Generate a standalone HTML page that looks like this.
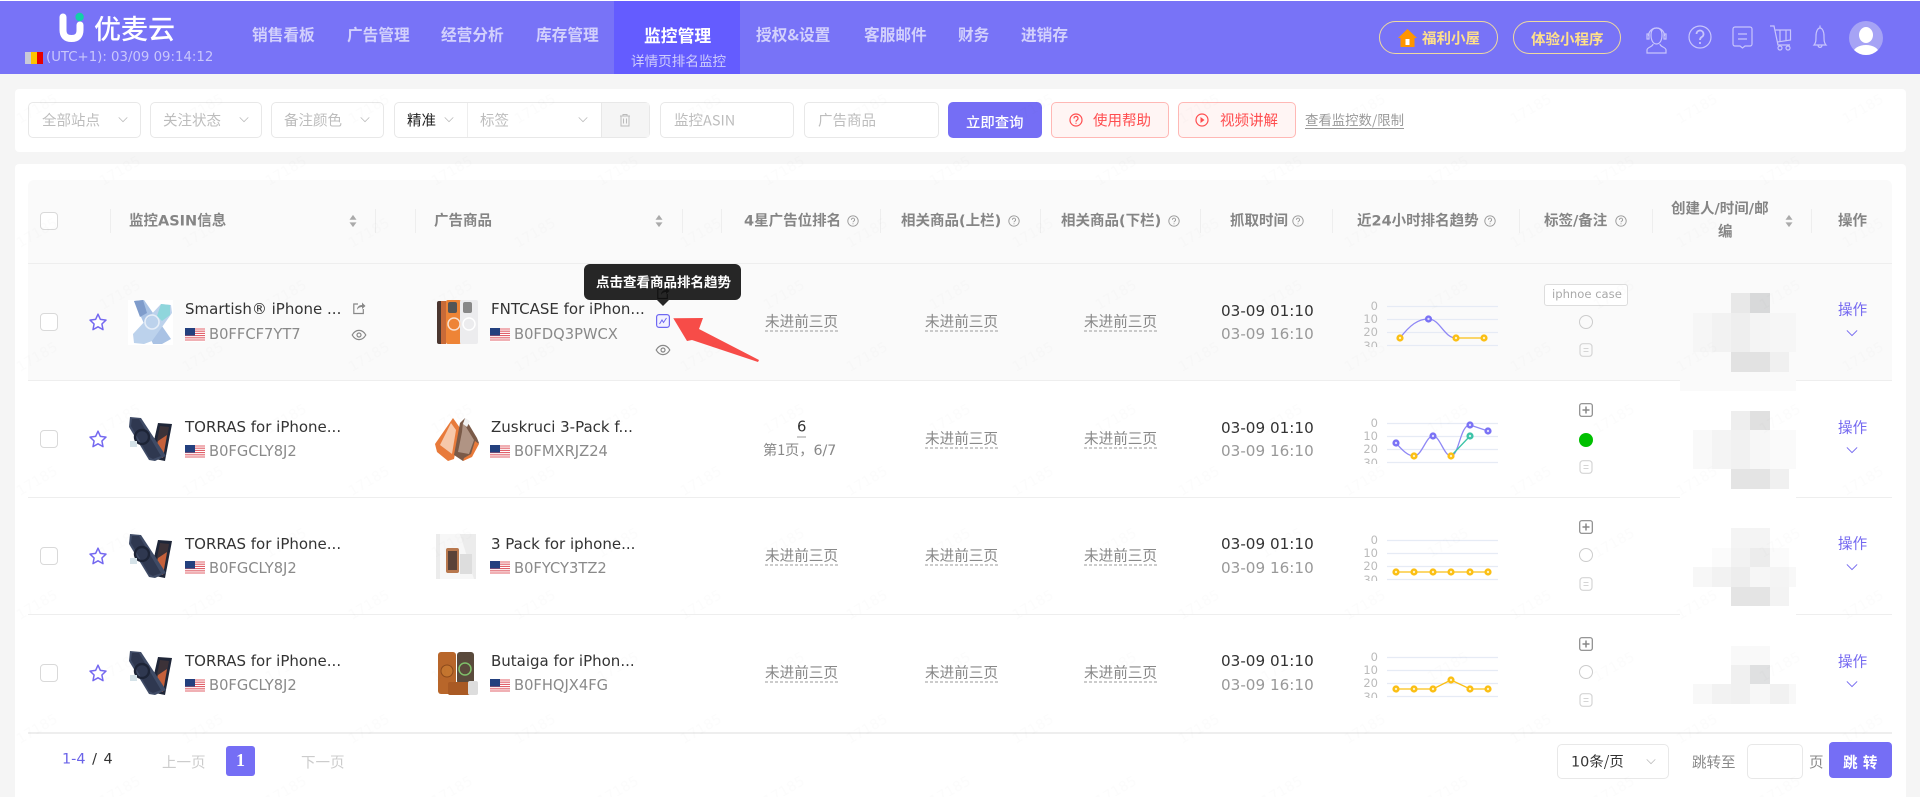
<!DOCTYPE html>
<html lang="zh"><head><meta charset="utf-8"><title>优麦云</title>
<style>
*{box-sizing:border-box}
html,body{margin:0;padding:0;background:#f5f5f5}
#p{position:relative;width:1920px;height:797px;overflow:hidden;background:#f5f5f5;font-family:"DejaVu Sans","Noto Sans CJK SC",sans-serif;font-size:14.6px;color:#333}
#p div,#p span.a,#p svg.a{position:absolute}
.t{position:absolute;white-space:nowrap;transform:translateY(-50%);line-height:1.2}
.nav{font-family:"Noto Sans CJK SC",sans-serif;font-weight:700;font-size:15.7px;color:#d2d0fc;top:35px}
.box{background:#fff;border:1px solid #e8e8e8;border-radius:5px;height:36px;top:102px}
.ph{color:#bdbdbd;top:120px;font-family:"Noto Sans CJK SC",sans-serif;font-size:14.5px}
.th{font-family:"DejaVu Sans","Noto Sans CJK SC",sans-serif;font-weight:700;font-size:14.5px;color:#858585;top:222px}
.dv{width:1px;height:24px;top:209px;background:#eee}
.row{left:28px;width:1864px;height:117px;border-bottom:1px solid #eee;background:#fff}
.cb{width:18px;height:18px;border:1px solid #d9d9d9;border-radius:4px;background:#fff}
.ti{color:#333;font-size:15px}
.as{color:#8a8a8a;font-size:14.7px}
.un{color:#888;font-family:"Noto Sans CJK SC",sans-serif;font-size:14.6px;border-bottom:1px dashed #999;line-height:18px;width:73px;text-align:center}
.tm{font-size:15.2px;color:#333}
.tg{font-size:15.2px;color:#999}
.op{font-family:"Noto Sans CJK SC",sans-serif;color:#7468f0;font-size:14.6px}
.hf{font-family:"Noto Sans CJK SC",sans-serif;font-weight:700}
</style></head><body>
<div id="p">
<svg width="0" height="0" style="position:absolute">
<defs>
<symbol id="q" viewBox="0 0 12 12"><circle cx="6" cy="6" r="5.2" fill="none" stroke="#999" stroke-width=".9"/><path d="M4.4 4.8a1.6 1.6 0 1 1 2.4 1.3c-.6.4-.8.6-.8 1.2M6 8.4v.9" fill="none" stroke="#999" stroke-width=".9"/></symbol>
<symbol id="st" viewBox="0 0 20 20"><path d="M10 2.2l2.4 5.2 5.6.7-4.1 3.9 1.1 5.6-5-2.8-5 2.8 1.1-5.6L2 8.1l5.6-.7z" fill="#fff" stroke="#7468f0" stroke-width="1.5" stroke-linejoin="round"/></symbol>
<symbol id="us" viewBox="0 0 20 14"><rect width="20" height="14" fill="#fff"/><path d="M0 1h20M0 3.2h20M0 5.4h20M0 7.6h20M0 9.8h20M0 12h20" stroke="#e0606a" stroke-width="1.1"/><rect width="10" height="7.6" fill="#23407e"/></symbol>
<symbol id="eye" viewBox="0 0 16 14"><path d="M1.2 7C3 3.8 5.3 2.4 8 2.4S13 3.8 14.800 7C13 10.200 10.700 11.600 8 11.600S3 10.200 1.200 7Z" fill="none" stroke="#888" stroke-width="1.200"/><circle cx="8" cy="7" r="2" fill="none" stroke="#888" stroke-width="1.200"/></symbol>
<symbol id="sh" viewBox="0 0 14 14"><path d="M6 3H1.800v9.500h9.500V8" fill="none" stroke="#888" stroke-width="1.200"/><path d="M5 9c0-3.500 2.500-5 5-5V1.500L13.500 5 10 8V6C8 6 6 7 5 9z" fill="#888"/></symbol>
<symbol id="sort" viewBox="0 0 10 16"><path d="M5 1l4 5.500H1zM5 15l-4-5.500h8z" fill="#aaa"/></symbol>
<symbol id="chev" viewBox="0 0 14 8"><path d="M1 1l6 6 6-6" fill="none" stroke="currentColor" stroke-width="1.100"/></symbol>
<symbol id="plus" viewBox="0 0 14 14"><rect x=".7" y=".7" width="12.600" height="12.600" rx="2" fill="#fff" stroke="#888" stroke-width="1.200"/><path d="M7 3.500v7M3.500 7h7" stroke="#888" stroke-width="1.500"/></symbol>
<symbol id="note" viewBox="0 0 14 14"><rect x="1" y=".7" width="12" height="12.600" rx="3" fill="none" stroke="#d5d5d5" stroke-width="1.200"/><path d="M4.500 5.500h5M4.500 8.500h5" stroke="#d5d5d5" stroke-width="1.100"/></symbol>
<symbol id="torras" viewBox="0 0 45 45">
<path d="M30 6l14 1-7 37-15-3z" fill="#1f2638"/><path d="M32 9l9 1-6 31-9-2z" fill="#3c3238"/><path d="M30 24l9-6-4 23-9-2z" fill="#c5603a"/>
<path d="M2 0l11 1 25 38-11 5-6-1L1 10z" fill="#3f4b66"/><path d="M4 2l7 0 22 37-8 3-4-2L3 9z" fill="#2f3850"/>
<circle cx="14" cy="20" r="7" fill="none" stroke="#1d2436" stroke-width="2.400"/><rect x="2" y="24" width="7" height="6" fill="#d5e2e8"/>
</symbol>
<pattern id="wm" width="166" height="124" patternUnits="userSpaceOnUse">
<text x="20" y="50" transform="rotate(-30 20 50)" font-family="DejaVu Sans" font-size="14" fill="#000" fill-opacity=".012">17185</text>
<text x="103" y="112" transform="rotate(-30 103 112)" font-family="DejaVu Sans" font-size="14" fill="#000" fill-opacity=".012">17185</text>
</pattern>
</defs>
</svg>

<!-- header -->
<div style="left:0;top:0;width:1920px;height:1px;background:#fff"></div>
<div style="left:0;top:1px;width:1920px;height:73px;background:#7873f7"></div>
<div style="left:614px;top:1px;width:126px;height:73px;background:#645cff"></div>
<svg class="a" style="left:55px;top:10px" width="35" height="36" viewBox="55 10 35 36"><path d="M63 17V30Q63 38.500 71.500 38.500Q80 38.500 80 30V25" fill="none" stroke="#fff" stroke-width="7" stroke-linecap="round"/><circle cx="79.600" cy="17" r="4.200" fill="#12cfa8"/></svg>
<span class="t" style="left:94px;top:28px;font-family:'Noto Sans CJK SC',sans-serif;font-size:27px;color:#fff;font-weight:500">优麦云</span>
<div style="left:25px;top:52px;width:6px;height:12px;background:#c9c9d8"></div><div style="left:31px;top:52px;width:6px;height:12px;background:#fdc400"></div><div style="left:37px;top:52px;width:6px;height:12px;background:#e80000"></div>
<span class="t" style="left:46px;top:58px;font-size:13.300px;color:#c9c7fb">(UTC+1): 03/09 09:14:12</span>
<span class="t nav" style="left:252px">销售看板</span>
<span class="t nav" style="left:347px">广告管理</span>
<span class="t nav" style="left:441px">经营分析</span>
<span class="t nav" style="left:536px">库存管理</span>
<span class="t nav" style="left:644px;color:#fff;font-size:16.800px">监控管理</span>
<span class="t" style="left:631px;top:60px;font-family:'Noto Sans CJK SC',sans-serif;font-size:13.600px;color:#cfcdfb">详情页排名监控</span>
<span class="t nav" style="left:756px">授权&amp;设置</span>
<span class="t nav" style="left:864px">客服邮件</span>
<span class="t nav" style="left:958px">财务</span>
<span class="t nav" style="left:1021px">进销存</span>
<div style="left:1379px;top:21px;width:119px;height:33px;border:1px solid #eed9a0;border-radius:17px"></div>
<svg class="a" style="left:1397px;top:28px" width="21" height="20" viewBox="0 0 21 20"><path d="M10.500 1L20 10h-2.500v9h-14v-9H1z" fill="#ff9500"/><rect x="8.500" y="11" width="4" height="6" fill="#fff"/></svg>
<span class="t hf" style="left:1422px;top:38px;font-size:14.500px;color:#ffe08a">福利小屋</span>
<div style="left:1513px;top:21px;width:108px;height:33px;border:1px solid #eed9a0;border-radius:17px"></div>
<span class="t hf" style="left:1531px;top:39px;font-size:14.500px;color:#ffe08a">体验小程序</span>
<svg class="a" style="left:1640px;top:10px" width="200" height="55" viewBox="0 0 200 55" fill="none" stroke="#c8c5fb" stroke-width="1.200">
<path d="M8.500 26a8 8 0 0 1 16 0M7 24v5h2v-5zM24 24v5h2v-5z"/><path d="M11 25c0 5 2 9 5.500 9s5.500-4 5.500-9-2-7-5.500-7-5.500 2-5.500 7zM13 34c0 3-6 3-6 6v3h19v-3c0-3-6-3-6-6"/>
<circle cx="60" cy="27" r="11"/><path d="M56.500 24a3.500 3.500 0 1 1 5 3.200c-1 .6-1.500 1.200-1.500 2.800M60 32v2" stroke-width="1.800"/>
<path d="M95 17h15a2 2 0 0 1 2 2v15a2 2 0 0 1-2 2h-5l-2.500 2-2.500-2h-5a2 2 0 0 1-2-2V19a2 2 0 0 1 2-2zM98 24h9M98 29h9"/>
<path d="M130 16h4l4 19h12M135.500 20h15v10l-13 2M140 20v12M146 20v11"/><circle cx="140" cy="38" r="2"/><circle cx="148" cy="38" r="2"/>
<path d="M174 35c2-2 2-5 2-9 0-5 2-8 4-8s4 3 4 8c0 4 0 7 2 9zM178 35.500c.5 2.500 3.500 2.500 4 0M180 18v-2.500"/>
</svg>
<div style="left:1849px;top:21px;width:34px;height:34px;border-radius:50%;background:#a6a3f5;overflow:hidden"><div style="left:10px;top:6px;width:14px;height:16px;border-radius:50%;background:#fff"></div><div style="left:4px;top:24px;width:26px;height:16px;border-radius:50%;background:#fff"></div></div>

<!-- filter -->
<div style="left:15px;top:89px;width:1891px;height:63px;background:#fff;border-radius:4px"></div>
<div class="box" style="left:28px;width:113px"></div><span class="t ph" style="left:42px">全部站点</span>
<div class="box" style="left:150px;width:112px"></div><span class="t ph" style="left:163px">关注状态</span>
<div class="box" style="left:271px;width:113px"></div><span class="t ph" style="left:284px">备注颜色</span>
<div class="box" style="left:394px;width:256px"></div>
<div style="left:467px;top:103px;width:1px;height:34px;background:#eee"></div>
<div style="left:601px;top:103px;width:48px;height:34px;background:#f5f5f5;border-left:1px solid #e8e8e8"></div>
<span class="t ph" style="left:407px;color:#222">精准</span>
<span class="t ph" style="left:480px">标签</span>
<svg class="a" style="left:118px;top:116px;color:#bbb" width="10" height="7"><use href="#chev"/></svg>
<svg class="a" style="left:239px;top:116px;color:#bbb" width="10" height="7"><use href="#chev"/></svg>
<svg class="a" style="left:360px;top:116px;color:#bbb" width="10" height="7"><use href="#chev"/></svg>
<svg class="a" style="left:444px;top:116px;color:#bbb" width="10" height="7"><use href="#chev"/></svg>
<svg class="a" style="left:578px;top:116px;color:#bbb" width="10" height="7"><use href="#chev"/></svg>
<svg class="a" style="left:619px;top:113px" width="12" height="14" viewBox="0 0 12 14" fill="none" stroke="#bbb"><path d="M1 3h10M4 3V1.500h4V3M2 3v10h8V3M4.500 5.500v5M7.500 5.500v5"/></svg>
<div class="box" style="left:660px;width:134px"></div><span class="t ph" style="left:674px">监控ASIN</span>
<div class="box" style="left:804px;width:135px"></div><span class="t ph" style="left:818px">广告商品</span>
<div style="left:948px;top:102px;width:94px;height:36px;background:#756ef5;border-radius:5px"></div>
<span class="t hf" style="left:966px;top:122px;color:#fff;font-size:14.400px;font-weight:500">立即查询</span>
<div style="left:1051px;top:102px;width:118px;height:36px;background:#fff5f4;border:1px solid #ffb8b5;border-radius:5px"></div>
<svg class="a" style="left:1069px;top:113px" width="14" height="14" viewBox="0 0 14 14" fill="none" stroke="#ff4d4f" stroke-width="1.200"><circle cx="7" cy="7" r="6"/><path d="M5 5.500a2 2 0 1 1 3 1.600c-.7.400-1 .8-1 1.600M7 9.800v1"/></svg>
<span class="t ph" style="left:1093px;color:#ff4d4f">使用帮助</span>
<div style="left:1178px;top:102px;width:118px;height:36px;background:#fff5f4;border:1px solid #ffb8b5;border-radius:5px"></div>
<svg class="a" style="left:1195px;top:113px" width="14" height="14" viewBox="0 0 14 14"><circle cx="7" cy="7" r="6" fill="none" stroke="#ff4d4f" stroke-width="1.200"/><path d="M5.500 4l4 3-4 3z" fill="#ff4d4f"/></svg>
<span class="t ph" style="left:1220px;color:#ff4d4f">视频讲解</span>
<span class="t" style="left:1305px;top:120px;font-family:'Noto Sans CJK SC',sans-serif;font-size:13.400px;color:#999;border-bottom:1px solid #999;line-height:17px">查看监控数/限制</span>

<!-- table card -->
<div style="left:15px;top:164px;width:1891px;height:640px;background:#fff;border-radius:4px"></div>
<div style="left:28px;top:180px;width:1864px;height:84px;background:#fafafa;border-bottom:1px solid #eee;border-radius:6px 6px 0 0"></div>
<div class="cb" style="left:40px;top:212px"></div>
<div class="dv" style="left:110px"></div><div class="dv" style="left:375px"></div><div class="dv" style="left:415px"></div><div class="dv" style="left:682px"></div><div class="dv" style="left:721px"></div><div class="dv" style="left:880px"></div><div class="dv" style="left:1040px"></div><div class="dv" style="left:1200px"></div><div class="dv" style="left:1332px"></div><div class="dv" style="left:1519px"></div><div class="dv" style="left:1652px"></div><div class="dv" style="left:1811px"></div>
<span class="t th" style="left:129px">监控ASIN信息</span>
<svg class="a" style="left:348px;top:214px" width="10" height="14"><use href="#sort"/></svg>
<span class="t th" style="left:434px">广告商品</span>
<svg class="a" style="left:654px;top:214px" width="10" height="14"><use href="#sort"/></svg>
<span class="t th" style="left:744px">4星广告位排名</span><svg class="a" style="left:847px;top:215px" width="12" height="12"><use href="#q"/></svg>
<span class="t th" style="left:901px">相关商品(上栏)</span><svg class="a" style="left:1008px;top:215px" width="12" height="12"><use href="#q"/></svg>
<span class="t th" style="left:1061px">相关商品(下栏)</span><svg class="a" style="left:1168px;top:215px" width="12" height="12"><use href="#q"/></svg>
<span class="t th" style="left:1230px">抓取时间</span><svg class="a" style="left:1292px;top:215px" width="12" height="12"><use href="#q"/></svg>
<span class="t th" style="left:1357px">近24小时排名趋势</span><svg class="a" style="left:1484px;top:215px" width="12" height="12"><use href="#q"/></svg>
<span class="t th" style="left:1544px">标签/备注</span><svg class="a" style="left:1615px;top:215px" width="12" height="12"><use href="#q"/></svg>
<span class="t th" style="left:1671px;top:210px">创建人/时间/邮</span><span class="t th" style="left:1718px;top:233px">编</span>
<svg class="a" style="left:1784px;top:214px" width="10" height="14"><use href="#sort"/></svg>
<span class="t th" style="left:1838px">操作</span>

<!-- rows backgrounds -->
<div class="row" style="top:264px;height:117px;background:#fafafa"></div>
<div class="row" style="top:381px"></div>
<div class="row" style="top:498px"></div>
<div style="left:28px;top:732px;width:1864px;height:2px;background:#eee"></div>

<!-- checkboxes, stars -->
<div class="cb" style="left:40px;top:313px"></div><div class="cb" style="left:40px;top:430px"></div><div class="cb" style="left:40px;top:547px"></div><div class="cb" style="left:40px;top:664px"></div>
<svg class="a" style="left:88px;top:312px" width="20" height="20"><use href="#st"/></svg>
<svg class="a" style="left:88px;top:429px" width="20" height="20"><use href="#st"/></svg>
<svg class="a" style="left:88px;top:546px" width="20" height="20"><use href="#st"/></svg>
<svg class="a" style="left:88px;top:663px" width="20" height="20"><use href="#st"/></svg>

<!-- thumbs col 1 -->
<svg class="a" style="left:128px;top:300px" width="45" height="45" viewBox="0 0 45 45"><rect width="45" height="45" fill="#fff"/><path d="M6 1l10-1 27 39-9 5-9 0z" fill="#a9c2e4"/><path d="M33 4l10 1 1 8-20 28-8 3-10-1-1-9z" fill="#bcd2ec"/><path d="M33 4l9 1 0 10-8 6-5-5z" fill="#8fd6dc"/><path d="M6 1l9-1 4 13-7 4z" fill="#7f9ccb"/><circle cx="24" cy="22" r="7" fill="none" stroke="#e6eef8" stroke-width="1.600"/></svg>
<svg class="a" style="left:128px;top:417px" width="45" height="45"><use href="#torras"/></svg>
<svg class="a" style="left:128px;top:534px" width="45" height="45"><use href="#torras"/></svg>
<svg class="a" style="left:128px;top:651px" width="45" height="45"><use href="#torras"/></svg>

<span class="t ti" style="left:185px;top:309px">Smartish® iPhone ...</span>
<span class="t ti" style="left:185px;top:427px">TORRAS for iPhone...</span>
<span class="t ti" style="left:185px;top:544px">TORRAS for iPhone...</span>
<span class="t ti" style="left:185px;top:661px">TORRAS for iPhone...</span>
<svg class="a" style="left:185px;top:328px" width="20" height="14"><use href="#us"/></svg><span class="t as" style="left:209px;top:335px">B0FFCF7YT7</span>
<svg class="a" style="left:185px;top:445px" width="20" height="14"><use href="#us"/></svg><span class="t as" style="left:209px;top:452px">B0FGCLY8J2</span>
<svg class="a" style="left:185px;top:561px" width="20" height="14"><use href="#us"/></svg><span class="t as" style="left:209px;top:569px">B0FGCLY8J2</span>
<svg class="a" style="left:185px;top:679px" width="20" height="14"><use href="#us"/></svg><span class="t as" style="left:209px;top:686px">B0FGCLY8J2</span>
<svg class="a" style="left:352px;top:301px" width="14" height="14"><use href="#sh"/></svg>
<svg class="a" style="left:351px;top:328px" width="16" height="14"><use href="#eye"/></svg>

<!-- thumbs col 2 -->
<svg class="a" style="left:436px;top:300px" width="44" height="45" viewBox="0 0 44 45"><rect x="1" y="1" width="9" height="43" rx="2" fill="#4a3630"/><rect x="5" y="1" width="5" height="43" fill="#c86a38"/><rect x="10" y="0" width="15" height="44" rx="2" fill="#ee8436"/><rect x="24" y="0" width="18" height="44" rx="2" fill="#ececee"/><rect x="12" y="2" width="9" height="11" rx="2" fill="#555"/><rect x="27" y="2" width="9" height="11" rx="2" fill="#888"/><circle cx="18" cy="24" r="6" fill="none" stroke="#f8e0d0" stroke-width="1.500"/><circle cx="33" cy="24" r="6" fill="none" stroke="#fff" stroke-width="1.500"/></svg>
<svg class="a" style="left:434px;top:417px" width="46" height="45" viewBox="0 0 46 45"><path d="M19 1l7 10-6 31-6 2-11-9-2-8z" fill="#e87a3a"/><path d="M17 6l5 7-4 24-12-9z" fill="#f6c8aa"/><path d="M31 1l12 20 2 5-7 13-9 5-9-6 6-32z" fill="#7a5a48"/><path d="M29 5l11 18-5 14-11-2 4-20z" fill="#b09484"/><path d="M31 1l5 3-3 6-4-3z" fill="#f2f2f2"/><path d="M41 24l4 3-7 13-9 4 1-3 7-4z" fill="#e87a3a"/></svg>
<svg class="a" style="left:436px;top:534px" width="44" height="45" viewBox="0 0 44 45"><rect width="40" height="45" x="0" fill="#ececec"/><path d="M4 0h20l14 45H4z" fill="#f7f7f7"/><rect x="10" y="14" width="13" height="25" rx="2" fill="#b8784e"/><rect x="12" y="17" width="9" height="19" fill="#5a4238"/><rect x="24" y="20" width="12" height="20" fill="#ddd"/></svg>
<svg class="a" style="left:436px;top:651px" width="44" height="45" viewBox="0 0 44 45"><rect x="2" y="1" width="18" height="42" rx="3" fill="#b8662a"/><rect x="21" y="1" width="17" height="32" rx="3" fill="#5a4a3c"/><circle cx="29" cy="18" r="6" fill="none" stroke="#7fbf6a" stroke-width="1.500"/><circle cx="11" cy="20" r="6" fill="#c4752f" stroke="#8c4a1c"/><rect x="12" y="31" width="24" height="13" rx="2" fill="#a95a24"/><rect x="32" y="30" width="10" height="14" rx="2" fill="#ddd"/></svg>

<span class="t ti" style="left:491px;top:309px">FNTCASE for iPhon...</span>
<span class="t ti" style="left:491px;top:427px">Zuskruci 3-Pack f...</span>
<span class="t ti" style="left:491px;top:544px">3 Pack for iphone...</span>
<span class="t ti" style="left:491px;top:661px">Butaiga for iPhon...</span>
<svg class="a" style="left:490px;top:328px" width="20" height="14"><use href="#us"/></svg><span class="t as" style="left:514px;top:335px">B0FDQ3PWCX</span>
<svg class="a" style="left:490px;top:445px" width="20" height="14"><use href="#us"/></svg><span class="t as" style="left:514px;top:452px">B0FMXRJZ24</span>
<svg class="a" style="left:490px;top:561px" width="20" height="14"><use href="#us"/></svg><span class="t as" style="left:514px;top:569px">B0FYCY3TZ2</span>
<svg class="a" style="left:490px;top:679px" width="20" height="14"><use href="#us"/></svg><span class="t as" style="left:514px;top:686px">B0FHQJX4FG</span>
<svg class="a" style="left:656px;top:314px" width="14" height="14" viewBox="0 0 14 14" fill="none" stroke="#6f68f2"><rect x=".6" y=".6" width="12.800" height="12.800" rx="2.500" stroke-width="1.200" fill="#f3f2ff"/><path d="M3.500 10l2.500-4 1.500 2.500L10.500 4"/></svg>
<svg class="a" style="left:655px;top:343px" width="16" height="14"><use href="#eye"/></svg>
<!-- tooltip -->
<div style="left:584px;top:264px;width:157px;height:36px;background:#262626;border-radius:6px"></div>
<svg class="a" style="left:657px;top:300px" width="12" height="6"><path d="M0 0h12L6 6z" fill="#262626"/></svg>
<span class="t" style="left:596px;top:281px;font-family:'Noto Sans CJK SC',sans-serif;font-weight:700;font-size:13.500px;color:#fff">点击查看商品排名趋势</span>
<svg class="a" style="left:655px;top:286px" width="16" height="14" viewBox="0 0 14 14" opacity=".55"><path d="M6 3H1.800v9.500h9.500V8" fill="none" stroke="#000" stroke-width="1.200"/><path d="M5 9c0-3.500 2.500-5 5-5V1.500L13.500 5 10 8V6C8 6 6 7 5 9z" fill="#000"/></svg>
<svg class="a" style="left:660px;top:310px" width="110" height="60" viewBox="660 310 110 60"><path d="M673.300 318.300L703 318L699 329L759 360L758 362L692 340L687 341Z" fill="#f74c48"/></svg>

<!-- 未进前三页 -->
<span class="t un" style="left:765px;top:322px">未进前三页</span>
<span class="t un" style="left:925px;top:322px">未进前三页</span>
<span class="t un" style="left:1084px;top:322px">未进前三页</span>
<span class="t" style="left:797px;top:428px;font-size:14.800px;color:#333;border-bottom:1px solid #999;line-height:18px">6</span>
<span class="t" style="left:763px;top:451px;font-size:14.200px;color:#888"><span style="font-family:'Noto Sans CJK SC',sans-serif">第1页，</span>6/7</span>
<span class="t un" style="left:925px;top:439px">未进前三页</span>
<span class="t un" style="left:1084px;top:439px">未进前三页</span>
<span class="t un" style="left:765px;top:556px">未进前三页</span>
<span class="t un" style="left:925px;top:556px">未进前三页</span>
<span class="t un" style="left:1084px;top:556px">未进前三页</span>
<span class="t un" style="left:765px;top:673px">未进前三页</span>
<span class="t un" style="left:925px;top:673px">未进前三页</span>
<span class="t un" style="left:1084px;top:673px">未进前三页</span>

<!-- times -->
<span class="t tm" style="left:1221px;top:311px">03-09 01:10</span><span class="t tg" style="left:1221px;top:334px">03-09 16:10</span>
<span class="t tm" style="left:1221px;top:428px">03-09 01:10</span><span class="t tg" style="left:1221px;top:451px">03-09 16:10</span>
<span class="t tm" style="left:1221px;top:544px">03-09 01:10</span><span class="t tg" style="left:1221px;top:568px">03-09 16:10</span>
<span class="t tm" style="left:1221px;top:661px">03-09 01:10</span><span class="t tg" style="left:1221px;top:685px">03-09 16:10</span>

<!-- charts -->
<svg class="a" style="left:1360px;top:263px" width="145" height="84" viewBox="0 0 145 84" font-family="DejaVu Sans" font-size="11.500" fill="#bbb" text-anchor="end">
<path d="M27 43.500h111M27 56.500h111M27 69.500h111M27 82.500h111" stroke="#e6ebf5" stroke-width="1.200"/>
<text x="18" y="47">0</text><text x="18" y="60">10</text><text x="18" y="73">20</text><text x="18" y="87">30</text>
<path d="M40 75C50 62 58 56 68.500 56C80 56 84 75 96 75" fill="none" stroke="#8f88f5" stroke-width="1.300"/><path d="M96 75H124" stroke="#fbbf14" stroke-width="1.300"/>
<g fill="#fff2c0" stroke="#fbbf14" stroke-width="2.400"><circle cx="40" cy="75" r="2.400"/><circle cx="96" cy="75" r="2.400"/><circle cx="124" cy="75" r="2.400"/></g><circle cx="68.500" cy="56" r="2.400" fill="#dcdaff" stroke="#7a72f5" stroke-width="2.400"/>
</svg>
<svg class="a" style="left:1360px;top:380px" width="145" height="84" viewBox="0 0 145 84" font-family="DejaVu Sans" font-size="11.500" fill="#bbb" text-anchor="end">
<path d="M27 43.500h111M27 56.500h111M27 69.500h111M27 82.500h111" stroke="#e6ebf5" stroke-width="1.200"/>
<text x="18" y="47">0</text><text x="18" y="60">10</text><text x="18" y="73">20</text><text x="18" y="87">30</text>
<path d="M36 63C42 70 48 76 54 76C62 76 66 56 73 56C80 56 84 76 91 76C99 76 100 45 110 45L128 51" fill="none" stroke="#8f88f5" stroke-width="1.300"/><path d="M91 76L110 56" stroke="#3cc3a8" stroke-width="1.300"/>
<g fill="#dcdaff" stroke="#7a72f5" stroke-width="2.400"><circle cx="36" cy="63" r="2.400"/><circle cx="73" cy="56" r="2.400"/><circle cx="110" cy="45" r="2.400"/><circle cx="128" cy="51" r="2.400"/></g>
<g fill="#fff2c0" stroke="#fbbf14" stroke-width="2.400"><circle cx="54" cy="76" r="2.400"/><circle cx="91" cy="76" r="2.400"/></g><circle cx="110" cy="56" r="2.400" fill="#d0f3ea" stroke="#3cc3a8" stroke-width="2.400"/>
</svg>
<svg class="a" style="left:1360px;top:497px" width="145" height="84" viewBox="0 0 145 84" font-family="DejaVu Sans" font-size="11.500" fill="#bbb" text-anchor="end">
<path d="M27 43.500h111M27 56.500h111M27 69.500h111M27 82.500h111" stroke="#e6ebf5" stroke-width="1.200"/>
<text x="18" y="47">0</text><text x="18" y="60">10</text><text x="18" y="73">20</text><text x="18" y="87">30</text>
<path d="M36 75H128" stroke="#fbbf14" stroke-width="1.300"/>
<g fill="#fff2c0" stroke="#fbbf14" stroke-width="2.400"><circle cx="36" cy="75" r="2.400"/><circle cx="54" cy="75" r="2.400"/><circle cx="73" cy="75" r="2.400"/><circle cx="91" cy="75" r="2.400"/><circle cx="110" cy="75" r="2.400"/><circle cx="128" cy="75" r="2.400"/></g>
</svg>
<svg class="a" style="left:1360px;top:614px" width="145" height="84" viewBox="0 0 145 84" font-family="DejaVu Sans" font-size="11.500" fill="#bbb" text-anchor="end">
<path d="M27 43.500h111M27 56.500h111M27 69.500h111M27 82.500h111" stroke="#e6ebf5" stroke-width="1.200"/>
<text x="18" y="47">0</text><text x="18" y="60">10</text><text x="18" y="73">20</text><text x="18" y="87">30</text>
<path d="M36 75H73L91 66L110 75H128" fill="none" stroke="#fbbf14" stroke-width="1.300"/>
<g fill="#fff2c0" stroke="#fbbf14" stroke-width="2.400"><circle cx="36" cy="75" r="2.400"/><circle cx="54" cy="75" r="2.400"/><circle cx="73" cy="75" r="2.400"/><circle cx="91" cy="66" r="2.400"/><circle cx="110" cy="75" r="2.400"/><circle cx="128" cy="75" r="2.400"/></g>
</svg>

<!-- tags -->
<div style="left:1544px;top:284px;width:84px;height:22px;border:1px solid #ddd;border-radius:3px;background:#fff"></div>
<span class="t" style="left:1552px;top:295px;font-size:11.600px;color:#aaa">iphnoe case</span>
<div style="left:1579px;top:315px;width:14px;height:14px;border:1.500px solid #ccc;border-radius:50%"></div>
<svg class="a" style="left:1579px;top:343px" width="14" height="14"><use href="#note"/></svg>
<svg class="a" style="left:1579px;top:403px" width="14" height="14"><use href="#plus"/></svg>
<div style="left:1579px;top:433px;width:14px;height:14px;background:#00c000;border-radius:50%"></div>
<svg class="a" style="left:1579px;top:460px" width="14" height="14"><use href="#note"/></svg>
<svg class="a" style="left:1579px;top:520px" width="14" height="14"><use href="#plus"/></svg>
<div style="left:1579px;top:548px;width:14px;height:14px;border:1.500px solid #ccc;border-radius:50%"></div>
<svg class="a" style="left:1579px;top:577px" width="14" height="14"><use href="#note"/></svg>
<svg class="a" style="left:1579px;top:637px" width="14" height="14"><use href="#plus"/></svg>
<div style="left:1579px;top:665px;width:14px;height:14px;border:1.500px solid #ccc;border-radius:50%"></div>
<svg class="a" style="left:1579px;top:693px" width="14" height="14"><use href="#note"/></svg>

<!-- mosaic -->
<div style="left:1680px;top:275px;width:116px;height:116px;background:#fafafa"></div>
<div style="left:1680px;top:391px;width:116px;height:330px;background:#fff"></div>
<svg class="a" style="left:1680px;top:275px" width="116" height="450" viewBox="0 0 116 450" shape-rendering="crispEdges">
<rect x="51" y="18" width="19" height="20" fill="#e8e8e8"/><rect x="70" y="18" width="20" height="20" fill="#d8d9da"/>
<rect x="13" y="38" width="19" height="39" fill="#f6f6f6"/><rect x="32" y="38" width="19" height="39" fill="#f2f2f2"/><rect x="51" y="38" width="19" height="39" fill="#eeeeee"/><rect x="70" y="38" width="20" height="39" fill="#f4f4f4"/><rect x="90" y="38" width="26" height="39" fill="#f6f6f6"/>
<rect x="51" y="77" width="39" height="20" fill="#e2e2e2"/><rect x="90" y="77" width="19" height="20" fill="#f0f0f0"/>
<rect x="51" y="136" width="19" height="19" fill="#eeeeee"/><rect x="70" y="136" width="20" height="19" fill="#e0e0e0"/>
<rect x="13" y="155" width="19" height="39" fill="#f9f9f9"/><rect x="32" y="155" width="19" height="39" fill="#f4f4f4"/><rect x="51" y="155" width="19" height="39" fill="#f1f1f1"/><rect x="70" y="155" width="20" height="39" fill="#f7f7f7"/><rect x="90" y="155" width="26" height="39" fill="#fafafa"/>
<rect x="51" y="194" width="39" height="20" fill="#e4e4e4"/><rect x="90" y="194" width="19" height="20" fill="#f0f0f0"/>
<rect x="51" y="253" width="39" height="20" fill="#f4f4f4"/>
<rect x="32" y="273" width="19" height="19" fill="#fbfbfb"/><rect x="51" y="273" width="19" height="19" fill="#f2f2f2"/><rect x="70" y="273" width="20" height="19" fill="#ececec"/><rect x="90" y="273" width="19" height="19" fill="#fbfbfb"/>
<rect x="13" y="292" width="19" height="20" fill="#f7f7f7"/><rect x="32" y="292" width="19" height="20" fill="#f2f2f2"/><rect x="51" y="292" width="19" height="20" fill="#ededed"/><rect x="70" y="292" width="20" height="20" fill="#f6f6f6"/><rect x="90" y="292" width="19" height="20" fill="#f4f4f4"/><rect x="109" y="292" width="7" height="20" fill="#f8f8f8"/>
<rect x="51" y="312" width="39" height="19" fill="#e4e4e4"/><rect x="90" y="312" width="19" height="19" fill="#f3f3f3"/>
<rect x="51" y="371" width="39" height="19" fill="#f9f9f9"/>
<rect x="51" y="390" width="19" height="19" fill="#f0f0f0"/><rect x="70" y="390" width="20" height="19" fill="#dfe0e1"/>
<rect x="13" y="409" width="19" height="20" fill="#f8f8f8"/><rect x="32" y="409" width="19" height="20" fill="#f2f2f2"/><rect x="51" y="409" width="19" height="20" fill="#f0f0f0"/><rect x="70" y="409" width="20" height="20" fill="#f7f7f7"/><rect x="90" y="409" width="19" height="20" fill="#f1f1f1"/><rect x="109" y="409" width="7" height="20" fill="#f8f8f8"/>
</svg>

<!-- ops -->
<span class="t op" style="left:1838px;top:309px">操作</span><svg class="a" style="left:1846px;top:329px;color:#7468f0" width="12" height="8"><use href="#chev"/></svg>
<span class="t op" style="left:1838px;top:427px">操作</span><svg class="a" style="left:1846px;top:446px;color:#7468f0" width="12" height="8"><use href="#chev"/></svg>
<span class="t op" style="left:1838px;top:543px">操作</span><svg class="a" style="left:1846px;top:563px;color:#7468f0" width="12" height="8"><use href="#chev"/></svg>
<span class="t op" style="left:1838px;top:661px">操作</span><svg class="a" style="left:1846px;top:680px;color:#7468f0" width="12" height="8"><use href="#chev"/></svg>

<!-- footer -->
<span class="t" style="left:62px;top:760px;font-size:14.400px;color:#333;word-spacing:2px"><span style="color:#6a63e8">1-4</span> / 4</span>
<span class="t ph" style="left:162px;top:762px;color:#ccc">上一页</span>
<div style="left:226px;top:746px;width:29px;height:30px;background:#756ef5;border-radius:3px"></div>
<span class="t" style="left:236px;top:761px;font-family:'Liberation Serif',serif;font-weight:700;font-size:18px;color:#fff">1</span>
<span class="t ph" style="left:301px;top:762px;color:#ccc">下一页</span>
<div class="box" style="left:1557px;top:744px;width:112px;height:35px"></div>
<span class="t" style="left:1571px;top:762px;color:#333;font-size:14.400px">10<span style="font-family:'Noto Sans CJK SC',sans-serif">条/页</span></span>
<svg class="a" style="left:1646px;top:758px;color:#bbb" width="10" height="7"><use href="#chev"/></svg>
<span class="t ph" style="left:1692px;top:762px;color:#888">跳转至</span>
<div class="box" style="left:1747px;top:744px;width:56px;height:35px"></div>
<span class="t ph" style="left:1809px;top:762px;color:#888">页</span>
<div style="left:1829px;top:742px;width:63px;height:36px;background:#756ef5;border-radius:4px"></div>
<span class="t" style="left:1843px;top:762px;font-family:'Noto Sans CJK SC',sans-serif;font-weight:700;font-size:14.600px;color:#fff;letter-spacing:1px">跳 转</span>

<!-- watermark -->
<svg class="a" style="left:0;top:74px;pointer-events:none" width="1920" height="723"><rect width="1920" height="723" fill="url(#wm)"/></svg>
</div>
</body></html>
